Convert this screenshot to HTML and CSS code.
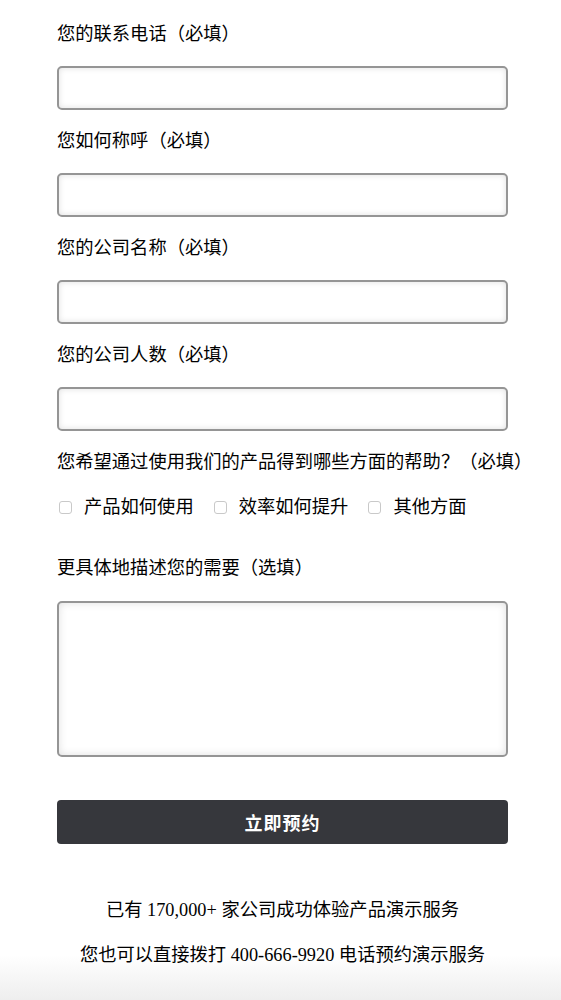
FILE: index.html
```html
<!DOCTYPE html>
<html lang="zh-CN">
<head>
<meta charset="utf-8">
<title>预约演示</title>
<link rel="stylesheet" href="styles.css">
</head>
<body>
<div class="page">
  <form class="form">
    <div class="field">
      <label class="label">您的联系电话（必填）</label>
      <input class="input" type="text">
    </div>
    <div class="field">
      <label class="label">您如何称呼（必填）</label>
      <input class="input" type="text">
    </div>
    <div class="field">
      <label class="label">您的公司名称（必填）</label>
      <input class="input" type="text">
    </div>
    <div class="field">
      <label class="label">您的公司人数（必填）</label>
      <input class="input" type="text">
    </div>
    <div class="field question">
      <label class="label">您希望通过使用我们的产品得到哪些方面的帮助？（必填）</label>
      <div class="checks">
        <label class="check"><span class="box"></span>产品如何使用</label>
        <label class="check"><span class="box"></span>效率如何提升</label>
        <label class="check"><span class="box"></span>其他方面</label>
      </div>
    </div>
    <div class="field detail">
      <label class="label">更具体地描述您的需要（选填）</label>
      <textarea class="textarea"></textarea>
    </div>
    <button class="submit" type="button">立即预约</button>
  </form>
  <div class="footer">
    <p class="note">已有 170,000+ 家公司成功体验产品演示服务</p>
    <p class="note">您也可以直接拨打 400-666-9920 电话预约演示服务</p>
  </div>
</div>
</body>
</html>
```
FILE: styles.css
```css
html, body {
  margin: 0;
  padding: 0;
}
body {
  width: 561px;
  height: 1000px;
  overflow: hidden;
  background: linear-gradient(to bottom, #ffffff 0, #ffffff 955px, #eeeeee 1000px);
  font-family: "Liberation Serif", "Noto Sans CJK SC", serif;
  color: #000;
}
.page {
  padding: 0 0 0 57px;
  width: 451px;
}
.form {
  display: flex;
  flex-direction: column;
}
.field {
  display: flex;
  flex-direction: column;
}
.label {
  font-size: 18.3px;
  line-height: 26px;
  margin-top: 18px;
  height: 26px;
  white-space: nowrap;
}
.field:first-child .label {
  margin-top: 21px;
}
.input {
  box-sizing: border-box;
  margin: 19px 0 0 0;
  width: 451px;
  height: 44px;
  border: 2px solid #959595;
  border-radius: 5px;
  box-shadow: inset 0 0 6px rgba(0,0,0,0.12);
  background: #fff;
  padding: 0 8px;
  outline: none;
}
.checks {
  display: flex;
  margin-top: 19px;
  height: 26px;
  align-items: center;
}
.check {
  display: flex;
  align-items: center;
  font-size: 18.3px;
  line-height: 26px;
  margin-right: 20px;
}
.box {
  display: inline-block;
  box-sizing: border-box;
  width: 13px;
  height: 13px;
  border: 1px solid #c9c9c9;
  border-radius: 3px;
  margin: 0 12px 0 0;
  background: #fff;
}
.check:first-child .box {
  margin-left: 2px;
}
.detail .label {
  margin-top: 35px;
}
.textarea {
  box-sizing: border-box;
  margin: 20px 0 0 0;
  width: 451px;
  height: 156px;
  border: 2px solid #959595;
  border-radius: 5px;
  box-shadow: inset 0 0 8px rgba(0,0,0,0.13);
  background: #fff;
  resize: none;
  outline: none;
}
.submit {
  margin-top: 43px;
  width: 451px;
  height: 44px;
  border: none;
  border-radius: 4px;
  background: #36373c;
  color: #fff;
  font-family: "Noto Sans CJK SC", sans-serif;
  font-weight: 700;
  font-size: 18px;
  letter-spacing: 1px;
  cursor: pointer;
}
.footer {
  margin-top: 53px;
  width: 451px;
  display: flex;
  flex-direction: column;
  align-items: center;
  gap: 19px;
}
.note {
  margin: 0;
  font-size: 18.3px;
  line-height: 26px;
  white-space: nowrap;
}
```
